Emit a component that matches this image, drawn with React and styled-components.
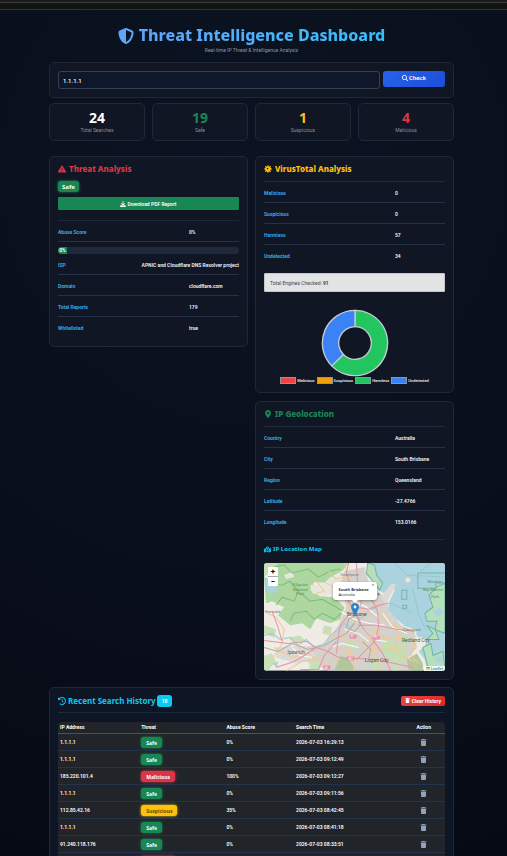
import React, { useState } from 'react'
import styled, { createGlobalStyle } from 'styled-components'
import {
    FaShieldHalved,
    FaMagnifyingGlass,
    FaTriangleExclamation,
    FaDownload,
    FaVirus,
    FaLocationDot,
    FaMapLocationDot,
    FaClockRotateLeft,
    FaTrash,
} from 'react-icons/fa6'

const stats = [
    { label: 'Total Searches', value: 24, color: '#ffffff' },
    { label: 'Safe', value: 19, color: '#198754' },
    { label: 'Suspicious', value: 1, color: '#ffc107' },
    { label: 'Malicious', value: 4, color: '#dc3545' },
]

const threatRows = [
    ['ISP', 'APNIC and Cloudflare DNS Resolver project'],
    ['Domain', 'cloudflare.com'],
    ['Total Reports', '179'],
    ['Whitelisted', 'true'],
]

const engines = [
    { label: 'Malicious', value: 0, color: '#ef4444' },
    { label: 'Suspicious', value: 0, color: '#f59e0b' },
    { label: 'Harmless', value: 57, color: '#22c55e' },
    { label: 'Undetected', value: 34, color: '#3b82f6' },
]

const geoRows = [
    ['Country', 'Australia'],
    ['City', 'South Brisbane'],
    ['Region', 'Queensland'],
    ['Latitude', '-27.4766'],
    ['Longitude', '153.0166'],
]

const initialHistory = [
    { id: 1, ip: '1.1.1.1', threat: 'Safe', score: '0%', time: '2026-07-03 16:29:13' },
    { id: 2, ip: '1.1.1.1', threat: 'Safe', score: '0%', time: '2026-07-03 09:12:49' },
    { id: 3, ip: '185.220.101.4', threat: 'Malicious', score: '100%', time: '2026-07-03 09:12:27' },
    { id: 4, ip: '1.1.1.1', threat: 'Safe', score: '0%', time: '2026-07-03 09:11:56' },
    { id: 5, ip: '112.85.42.16', threat: 'Suspicious', score: '35%', time: '2026-07-03 08:42:45' },
    { id: 6, ip: '1.1.1.1', threat: 'Safe', score: '0%', time: '2026-07-03 08:41:18' },
    { id: 7, ip: '91.240.118.176', threat: 'Safe', score: '0%', time: '2026-07-03 08:33:51' },
    { id: 8, ip: '185.220.101.4', threat: 'Malicious', score: '100%', time: '2026-07-03 08:31:07' },
]

const point = (radius, share) => {
    const a = share * Math.PI * 2 - Math.PI / 2
    return `${(50 + radius * Math.cos(a)).toFixed(2)} ${(50 + radius * Math.sin(a)).toFixed(2)}`
}

const arc = (from, to) => {
    const large = to - from > 0.5 ? 1 : 0
    return `M${point(48, from)} A48 48 0 ${large} 1 ${point(48, to)} L${point(24, to)} A24 24 0 ${large} 0 ${point(24, from)} Z`
}

function Donut({ data }) {
    const total = data.reduce((sum, d) => sum + d.value, 0)
    let from = 0
    return (
        <DonutSvg viewBox="0 0 100 100" role="img" aria-label="Engine results">
            {data.filter(d => d.value > 0).map(d => {
                const start = from
                from += d.value / total
                return <path key={d.label} d={arc(start, from)} fill={d.color} stroke="#c3cbd6" strokeWidth="2" />
            })}
        </DonutSvg>
    )
}

function Details({ rows, lined }) {
    return (
        <DetailList>
            {rows.map(([label, value]) => (
                <DetailRow key={label} $lined={lined}>
                    <dt>{label}</dt>
                    <dd>{value}</dd>
                </DetailRow>
            ))}
        </DetailList>
    )
}

function LocationMap() {
    const [popup, setPopup] = useState(true)

    return (
        <MapBox>
            <MapSvg viewBox="0 0 180 107" preserveAspectRatio="xMidYMid slice" aria-hidden="true">
                <rect width="180" height="107" fill="#eeece5" />
                {/* suburbs */}
                <path fill="#d5d2cd" d="M80 8 100 4 105 22 118 32 126 48 136 62 150 68 152 84 142 96 146 107H64L48 100 22 92 32 84 58 82 74 62 82 44 76 20Z" />
                <path fill="#dcdad6" d="M12 84 40 82 52 92 34 100 12 94Z" />
                {/* bushland */}
                <path fill="#aed6a0" d="M8 0H84L78 8 70 12 62 20 50 19 46 27 56 33 70 34 80 44 76 56 66 60 52 55 46 66 38 60 26 62 14 52 20 44 8 38 2 40 0 14 6 16Z" />
                <path fill="#c3dfb3" d="M0 0H14L8 8 0 14ZM0 62 12 66 10 74 0 70ZM120 76 134 80 142 88 138 100 124 96 116 88ZM84 76 92 80 90 86 80 84ZM134 72 142 70 146 80 138 84Z" />
                <path fill="#b4c79c" d="M76 92 86 98 92 107H70ZM142 96 152 90 158 100 158 107H144Z" />
                <path fill="#c8e0ba" d="M24 74 36 72 42 78 30 80ZM0 92 8 90 12 98 4 107H0ZM44 96 54 97 56 107H46ZM104 98 112 94 118 102 110 107ZM60 62 68 64 66 72 58 70ZM126 100 136 98 138 106 128 107Z" />
                <path fill="#e8e6df" d="M46 22 58 22 66 14 76 12 76 28 60 32 48 30ZM20 12 28 9 30 14 22 16Z" />
                <path fill="none" stroke="#7cbd7b" strokeWidth="1" d="M10 4 20 2 28 10 44 6 54 14 66 8 76 6M6 20 18 22 26 18 34 28 30 38 18 34 12 42M34 28 46 38 58 36 72 44 78 48 70 56 58 50 50 56 42 48 30 50 26 58" />
                {/* bay */}
                <path fill="#aad3df" d="M103 0H180V107H162L160 96 154 88 160 82 162 75 152 73 151 66 140 63 132 56 124 47 124 40 130 27 127 22 119 30 113 26 109 18 102 12Z" />
                <path fill="#b9dcbc" stroke="#72b8a0" d="M103 0 110 2 112 12 118 20 115 27 108 18 102 10Z" />
                <path fill="#dedbd4" d="M117 33 127 20 131 22 124 36 121 44Z" />
                <path fill="#b6dfbb" stroke="#6fb79c" strokeWidth="1" d="M164 32 172 24 180 20V70L170 66 172 58 162 58 160 50 168 44ZM162 62 170 66 174 76 162 76 168 70ZM158 84 166 80 168 92 178 88 180 107H164Z" />
                <path fill="#aad3df" d="M168 48 176 44 178 50 172 54ZM172 92 178 94 176 100 170 98Z" />
                <g fill="none" stroke="#72b7ac" strokeWidth="1">
                    <path d="M153 10H180M153 10V25H171V20H180M137 27H142V36H137ZM138 42H142V45H138Z" />
                    <path opacity=".5" strokeDasharray="2 1" d="M130 0 142 12 180 14M148 26 154 52 160 64M166 0 154 10M126 40 148 50" />
                </g>
                <circle cx="143" cy="17" r="3" fill="#e6e7e3" stroke="#c2ccd0" strokeWidth="1" />
                <circle cx="114" cy="31" r="1" fill="#7b5ea8" />
                {/* river and lakes */}
                <path fill="none" stroke="#9ccbdc" strokeWidth="1" d="M0 72 8 70 16 76 26 74 34 82 42 76 50 84 60 80 66 72 74 66 80 60 86 64 92 56 98 54 104 48 112 44 120 40" />
                <path fill="#aad3df" d="M2 15 10 17 13 28 6 31 1 24ZM8 100 14 98 13 104ZM72 25 76 28 72 32Z" />
                {/* streets */}
                <g fill="none" stroke="#f3c98f" strokeWidth="1">
                    <path d="M80 0 84 16 80 28 84 44 90 60 84 78 90 107M96 52 112 50 124 58 138 66 150 68M92 66 106 66 118 72 124 82 136 92 150 98M62 20 74 26 84 30M58 66 72 74 84 72 98 80 112 90 116 107M10 84 28 94 44 90 60 100 76 96M0 48 12 54 20 66 18 80 8 96M64 8 72 16 88 12M110 62 114 74 128 76 142 74M104 34 112 42 118 48M98 88 106 84 120 86 134 84M22 107 38 98 56 96" />
                    <path d="M52 18 60 28 52 30M74 84 84 90 98 96M102 74 112 82 106 92 112 98M128 60 134 70 130 80 138 88M148 70 150 84 146 92 154 100" />
                </g>
                <g fill="none" stroke="#fffdf8" strokeWidth="1">
                    <path d="M76 48 90 56 104 60 120 62M86 36 102 44 114 54M100 66 108 76 122 78M66 84 78 80 94 84M28 84 36 92 48 94M80 66 94 70 104 78M118 50 128 64 142 70" />
                </g>
                <g fill="none" stroke="#b3aaa4" strokeWidth="1">
                    <path d="M0 84 14 88 28 80 44 86 60 82 70 76 82 70 90 60M82 64 84 56 92 52 96 62 90 68 82 64M98 78 106 86 104 96" />
                </g>
                {/* motorways */}
                <g fill="none" stroke="#e892a2" strokeWidth="1">
                    <path d="M0 77 24 80 42 78 52 84 64 88 74 94 92 95 112 96 130 100 148 104" />
                    <path d="M8 48 14 64 18 78M72 90 74 72 76 62 84 52 90 48 84 38 86 22 82 10 84 0M96 42 98 30 93 20 92 0M92 50 98 64 108 76 118 90 126 107" />
                    <path d="M98 28 108 38 113 48 114 64 110 78 100 88 92 96M72 78 60 92 54 106 36 106M93 62 112 62 132 66 150 68M92 44 104 46 114 42 124 40M52 84 40 92 30 98 12 104" />
                </g>
                <g fill="#e68fa2">
                    <rect x="85" y="71" width="7" height="4" rx="1" />
                    <rect x="108" y="72" width="7" height="4" rx="1" />
                    <rect x="82" y="93" width="8" height="4" rx="1" />
                    <rect x="59" y="102" width="7" height="4" rx="1" />
                </g>
                <MapLabel $small x="88" y="74">A7</MapLabel>
                <MapLabel $small x="111" y="75">M3</MapLabel>
                <MapLabel $small x="86" y="96">M2</MapLabel>
                <MapLabel $small x="62" y="105">A5</MapLabel>
                <MapLabel $park x="36" y="23">D'Aguilar</MapLabel>
                <MapLabel $park x="36" y="28">National</MapLabel>
                <MapLabel $park x="36" y="32">Park</MapLabel>
                <MapLabel $park x="170" y="20">Moreton</MapLabel>
                <MapLabel $park x="168" y="28">Bay Marine</MapLabel>
                <MapLabel $park x="170" y="35">Park</MapLabel>
                <MapLabel $minor x="9" y="50">Fernvale</MapLabel>
                <MapLabel $minor x="85" y="13">Strathpine</MapLabel>
                <MapLabel x="92" y="53">Brisbane</MapLabel>
                <MapLabel x="32" y="91">Ipswich</MapLabel>
                <MapLabel x="112" y="98">Logan City</MapLabel>
                <MapLabel x="151" y="79">Redland City</MapLabel>
                <MapLabel $minor x="147" y="68">Cleveland</MapLabel>
            </MapSvg>
            <ZoomControl>
                <button aria-label="Zoom in">+</button>
                <button aria-label="Zoom out">−</button>
            </ZoomControl>
            <Pin viewBox="0 0 25 41" aria-hidden="true">
                <path fill="#2a81cb" stroke="#1f6aa8" d="M12.5 .5C5.9.5.5 5.9.5 12.5c0 3 1 5.500 2.500 8L12.500 40 22 20.500c1.500-2.500 2.500-5 2.500-8C24.500 5.900 19.100.5 12.500.5Z" />
                <circle cx="12.500" cy="12.500" r="4.500" fill="#fff" />
            </Pin>
            {popup &&
                <Popup>
                    <strong>South Brisbane</strong>
                    <span>Australia</span>
                    <button aria-label="Close popup" onClick={() => setPopup(false)}>×</button>
                </Popup>
            }
            <Attribution>
                <svg viewBox="0 0 12 8" aria-hidden="true">
                    <path fill="#4c7be1" d="M0 0h12v4H0z" />
                    <path fill="#ffd500" d="M0 4h12v4H0z" />
                </svg>
                <a href="#leaflet">Leaflet</a>
            </Attribution>
        </MapBox>
    )
}

function App() {
    const [ip, setIp] = useState('1.1.1.1')
    const [history, setHistory] = useState(initialHistory)

    const removeEntry = (id) => {
        setHistory(history.filter(entry => entry.id !== id))
    }

    const totalEngines = engines.reduce((sum, e) => sum + e.value, 0)

    return (
        <>
            <GlobalStyle />
            <Page>
                <TopStrip><i /></TopStrip>
                <Container>
                    <Header>
                        <h1><FaShieldHalved /><span>Threat Intelligence Dashboard</span></h1>
                        <p>Real-time IP Threat &amp; Intelligence Analysis</p>
                    </Header>

                    <SearchCard onSubmit={(e) => e.preventDefault()}>
                        <input aria-label="IP address" value={ip} onChange={(e) => setIp(e.target.value)} />
                        <button type="submit"><FaMagnifyingGlass />Check</button>
                    </SearchCard>

                    <StatGrid>
                        {stats.map(stat => (
                            <StatCard key={stat.label} $color={stat.color}>
                                <strong>{stat.value}</strong>
                                <span>{stat.label}</span>
                            </StatCard>
                        ))}
                    </StatGrid>

                    <Columns>
                        <Card>
                            <CardTitle $color="#dc3545"><FaTriangleExclamation />Threat Analysis</CardTitle>
                            <Badge $large>Safe</Badge>
                            <DownloadButton><FaDownload />Download PDF Report</DownloadButton>
                            <Divider />
                            <Details lined rows={[['Abuse Score', '0%']]} />
                            <Progress><div>0%</div></Progress>
                            <Details rows={threatRows} />
                        </Card>

                        <Stack>
                            <Card>
                                <CardTitle $color="#ffc107"><FaVirus />VirusTotal Analysis</CardTitle>
                                <Divider />
                                <Details rows={engines.map(e => [e.label, e.value])} />
                                <Notice>Total Engines Checked: <b>{totalEngines}</b></Notice>
                                <Donut data={engines} />
                                <Legend>
                                    {engines.map(e => <LegendItem key={e.label} $color={e.color}>{e.label}</LegendItem>)}
                                </Legend>
                            </Card>

                            <Card>
                                <CardTitle $color="#198754"><FaLocationDot />IP Geolocation</CardTitle>
                                <Divider />
                                <Details rows={geoRows} />
                                <Divider />
                                <MapTitle><FaMapLocationDot />IP Location Map</MapTitle>
                                <LocationMap />
                            </Card>
                        </Stack>
                    </Columns>

                    <HistoryCard>
                        <HistoryHead>
                            <h2><FaClockRotateLeft />Recent Search History</h2>
                            <Count>10</Count>
                            <ClearButton onClick={() => setHistory([])}><FaTrash />Clear History</ClearButton>
                        </HistoryHead>
                        <HistoryTable>
                            <thead>
                                <tr>
                                    <th>IP Address</th>
                                    <th>Threat</th>
                                    <th>Abuse Score</th>
                                    <th>Search Time</th>
                                    <th>Action</th>
                                </tr>
                            </thead>
                            <tbody>
                                {history.map(entry => (
                                    <tr key={entry.id}>
                                        <td>{entry.ip}</td>
                                        <td><Badge $level={entry.threat}>{entry.threat}</Badge></td>
                                        <td>{entry.score}</td>
                                        <td>{entry.time}</td>
                                        <td>
                                            <button aria-label={`Delete ${entry.ip}`} onClick={() => removeEntry(entry.id)}>
                                                <FaTrash />
                                            </button>
                                        </td>
                                    </tr>
                                ))}
                            </tbody>
                        </HistoryTable>
                    </HistoryCard>
                </Container>
            </Page>
        </>
    )
}

const headingFont = '"Noto Sans", "Open Sans", sans-serif'

const GlobalStyle = createGlobalStyle`
    *{
        box-sizing: border-box;
        margin: 0;
        padding: 0;
    }
    body{
        background: #080d18;
        color: #f1f3f5;
        font-family: Roboto, "Noto Sans", sans-serif;
        font-size: 5px;
        line-height: 8px;
    }
    h1, h2, h3{
        font-family: ${headingFont};
        font-weight: 800;
    }
    button, input{
        font: inherit;
    }
    button{
        border: none;
        cursor: pointer;
    }
`

const Page = styled.div`
    height: 100vh;
    overflow-y: auto;
    scrollbar-width: none;
    background: radial-gradient(circle at 50% 20%, #0b1322 0%, #090f1c 50%, #060a14 100%);
`

const TopStrip = styled.div`
    height: 10px;
    padding-top: 2px;
    background: #1b1c1d;
    border-bottom: 1px solid #313234;
    i{
        display: block;
        height: 7px;
        background: #121315;
        border-top: 1px solid #3a3b3d;
    }
`

const Container = styled.main`
    padding: 15px 53px 0 49px;
`

const Header = styled.header`
    text-align: center;
    margin-bottom: 8px;
    h1{
        display: flex;
        align-items: center;
        justify-content: center;
        gap: 5px;
        font-size: 16px;
        line-height: 21px;
        color: #60a5fa;
        span{
            background: linear-gradient(90deg, #60a5fa, #38bdf8);
            background-clip: text;
            color: transparent;
        }
    }
    p{
        color: #8d96a5;
    }
`

const panel = `
    background: #101624;
    border: 1px solid #1e2836;
    border-radius: 5px;
`

const SearchCard = styled.form`
    ${panel}
    display: flex;
    align-items: flex-start;
    gap: 3px;
    padding: 8px;
    input{
        flex: 1;
        min-width: 0;
        height: 18px;
        padding: 0 4px;
        color: #fff;
        background: #0f172a;
        border: 1px solid #334155;
        border-radius: 3px;
        outline: none;
        font-size: 6px;
        font-weight: 500;
    }
    button{
        display: flex;
        align-items: center;
        justify-content: center;
        gap: 1px;
        width: 62px;
        height: 16px;
        padding-bottom: 2px;
        border-radius: 3px;
        color: #fff;
        font-size: 6px;
        font-weight: 600;
        background: linear-gradient(135deg, #2563eb, #1d4ed8);
    }
`

const StatGrid = styled.section`
    display: grid;
    grid-template-columns: repeat(4, 1fr);
    gap: 7px;
    margin-top: 5px;
`

const StatCard = styled.div`
    ${panel}
    display: flex;
    flex-direction: column;
    align-items: center;
    padding: 5px 0 6px;
    strong{
        font-family: ${headingFont};
        font-size: 14px;
        line-height: 17px;
        color: ${props => props.$color};
    }
    span{
        color: #8b919b;
    }
`

const Columns = styled.div`
    display: grid;
    grid-template-columns: 1fr 1fr;
    align-items: start;
    gap: 7px;
    margin-top: 15px;
`

const Stack = styled.div`
    display: grid;
    gap: 8px;
`

const Card = styled.section`
    ${panel}
    padding: 6px 8px 8px;
    min-width: 0;
`

const CardTitle = styled.h2`
    display: flex;
    align-items: center;
    gap: 3px;
    font-size: 8px;
    line-height: 11px;
    color: ${props => props.$color};
`

const levels = {
    Safe: ['#198754', '#fff'],
    Malicious: ['#dc3545', '#fff'],
    Suspicious: ['#ffc107', '#5c4a0c'],
}

const Badge = styled.span`
    display: inline-block;
    padding: ${props => props.$large ? '2px 4px 1px' : '2px 5px 1px'};
    margin-top: ${props => props.$large ? '7px' : '0'};
    border-radius: 3px;
    font-family: ${headingFont};
    font-weight: 700;
    font-size: ${props => props.$large ? '6px' : '5px'};
    line-height: 8px;
    vertical-align: top;
    color: ${props => levels[props.$level || 'Safe'][1]};
    background: ${props => levels[props.$level || 'Safe'][0]};
    box-shadow: 0 0 3px ${props => levels[props.$level || 'Safe'][0]};
`

const DownloadButton = styled.button`
    display: flex;
    align-items: center;
    justify-content: center;
    gap: 1px;
    width: 100%;
    height: 13px;
    margin: 5px 0 10px;
    border-radius: 1px;
    color: #fff;
    font-weight: 600;
    background: #198754;
    svg{
        width: 6px;
        height: 6px;
    }
`

const Divider = styled.hr`
    border: none;
    border-top: 1px solid #1e2a3a;
    margin-top: 7px;
`

const DetailList = styled.dl`
    width: 100%;
`

const DetailRow = styled.div`
    display: flex;
    justify-content: space-between;
    padding: 7px 0 5px;
    border-bottom: 1px solid #243147;
    &:last-child{
        border-bottom-color: ${props => props.$lined ? '#243147' : 'transparent'};
    }
    dt{
        font-weight: 700;
        color: #38a9e0;
    }
    dd{
        min-width: 50px;
        white-space: nowrap;
        font-weight: 600;
    }
`

const Progress = styled.div`
    height: 7px;
    margin-top: 5px;
    border-radius: 4px;
    overflow: hidden;
    background: #1e293b;
    div{
        width: 5%;
        line-height: 7px;
        font-weight: 700;
        text-align: center;
        color: #fff;
        background: #198754;
    }
`

const Notice = styled.p`
    padding: 5px 5px 4px;
    margin: 7px 0 17px;
    border: 1px solid #c4c8cb;
    border-radius: 1px;
    color: #41464b;
    background: #e2e3e5;
`

const DonutSvg = styled.svg`
    display: block;
    width: 68px;
    height: 68px;
    margin: 0 auto;
`

const Legend = styled.ul`
    display: flex;
    justify-content: center;
    gap: 2px;
    list-style: none;
    font-size: 4px;
    line-height: 6px;
    font-weight: 500;
`

const LegendItem = styled.li`
    display: flex;
    align-items: center;
    gap: 1px;
    &::before{
        content: '';
        width: 14px;
        height: 5px;
        border: 1px solid #8f96a1;
        background: ${props => props.$color};
    }
`

const MapTitle = styled.h3`
    display: flex;
    align-items: center;
    gap: 2px;
    margin: 5px 0 9px;
    font-size: 6px;
    line-height: 9px;
    color: #0dbfe6;
    svg{
        width: 7px;
        height: 7px;
    }
`

const MapBox = styled.div`
    position: relative;
    overflow: hidden;
    border-radius: 3px;
    color: #333;
`

const MapSvg = styled.svg`
    display: block;
    width: 100%;
`

const MapLabel = styled.text`
    font-size: ${props => props.$small ? '3px' : props.$park || props.$minor ? '4px' : '5px'};
    text-anchor: middle;
    fill: ${props => props.$small ? '#fff' : props.$park ? '#4f9a50' : props.$minor ? '#777' : '#55504d'};
`

const ZoomControl = styled.div`
    position: absolute;
    top: 4px;
    left: 4px;
    display: grid;
    gap: 1px;
    background: #aaa;
    border-radius: 1px;
    overflow: hidden;
    button{
        width: 10px;
        height: 9px;
        font-size: 8px;
        font-weight: 700;
        line-height: 9px;
        color: #000;
        background: #fff;
    }
`

const Pin = styled.svg`
    position: absolute;
    left: 50%;
    top: 40px;
    width: 8px;
    height: 13px;
    margin-left: -4px;
`

const Popup = styled.div`
    position: absolute;
    left: 50%;
    top: 19px;
    width: 44px;
    margin-left: -22px;
    padding: 5px 6px 3px;
    border-radius: 3px;
    background: #fff;
    box-shadow: 0 1px 3px rgba(0, 0, 0, 0.4);
    font-family: ${headingFont};
    font-size: 4px;
    line-height: 5px;
    strong, span{
        display: block;
        white-space: nowrap;
    }
    button{
        position: absolute;
        top: 1px;
        right: 1px;
        width: 5px;
        font-size: 5px;
        line-height: 5px;
        color: #757575;
        background: none;
    }
    &::after{
        content: '';
        position: absolute;
        left: 50%;
        bottom: -3px;
        margin-left: -3px;
        border: 3px solid transparent;
        border-top-color: #fff;
        border-bottom: none;
    }
`

const Attribution = styled.div`
    position: absolute;
    right: 0;
    bottom: 0;
    display: flex;
    align-items: center;
    gap: 1px;
    padding: 0 2px;
    font-size: 4px;
    line-height: 5px;
    background: rgba(255, 255, 255, 0.8);
    svg{
        width: 4px;
        height: 3px;
    }
    a{
        color: #0078a8;
        text-decoration: none;
    }
`

const HistoryCard = styled.section`
    ${panel}
    background: #0e1626;
    margin-top: 7px;
    padding: 7px 8px;
`

const HistoryHead = styled.div`
    display: flex;
    align-items: center;
    gap: 1px;
    padding-bottom: 5px;
    margin-bottom: 9px;
    border-bottom: 1px solid #1b2a3f;
    h2{
        display: flex;
        align-items: center;
        gap: 2px;
        font-size: 8px;
        line-height: 11px;
        font-weight: 700;
        color: #0dcaf0;
    }
`

const Count = styled.span`
    padding: 2px 5px;
    border-radius: 3px;
    font-weight: 700;
    color: #fff;
    background: #0dcaf0;
`

const ClearButton = styled.button`
    display: flex;
    align-items: center;
    gap: 2px;
    height: 10px;
    padding: 0 4px;
    margin-left: auto;
    border-radius: 2px;
    font-weight: 700;
    color: #fff;
    background: linear-gradient(135deg, #ef4444, #dc2626);
`

const HistoryTable = styled.table`
    width: 100%;
    table-layout: fixed;
    border-collapse: collapse;
    color: #fff;
    background: #212529;
    border-radius: 3px 3px 0 0;
    th{
        height: 12px;
        padding: 0 2px;
        text-align: left;
        border-bottom: 1px solid #4d5154;
        &:nth-child(1){
            width: 21%;
        }
        &:nth-child(2){
            width: 22%;
        }
        &:nth-child(3){
            width: 18%;
        }
        &:nth-child(4){
            width: 28%;
        }
        &:last-child{
            text-align: center;
        }
    }
    td{
        height: 17px;
        padding: 0 2px;
        font-weight: 600;
        border-bottom: 1px solid #24344f;
        &:last-child{
            text-align: center;
        }
    }
    button{
        display: inline-flex;
        color: #94a3b8;
        background: none;
        font-size: 7px;
        vertical-align: middle;
    }
`

export default App
